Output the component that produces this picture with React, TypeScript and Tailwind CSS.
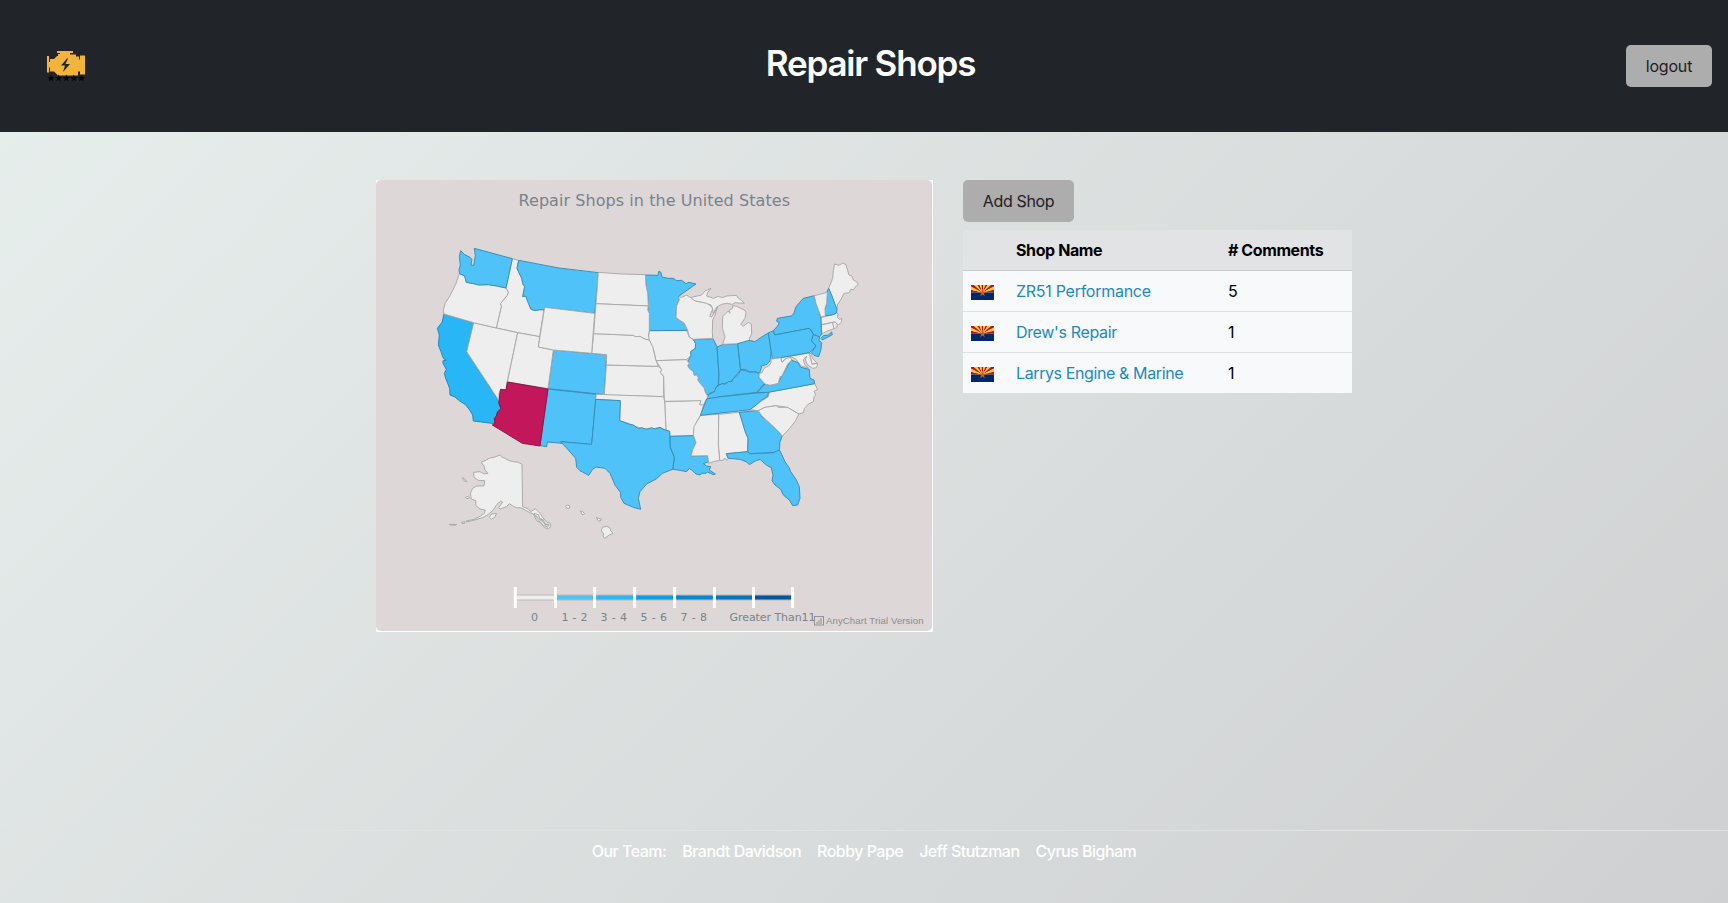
import React from "react";

type Origin = "west" | "central" | "east" | "south" | "pacific";
type Shape = { id: string; at: Origin; d: string };

const origins: Record<Origin, string> = {
  west: "translate(0 0)",
  central: "translate(480 0)",
  east: "translate(795 15)",
  south: "translate(225 405)",
  pacific: "translate(-165 585)",
};

const fills: Record<string, [string, string]> = {
  none: ["#eeeeee", "#a7a7a7"],
  low: ["#4fc3f9", "#378aaf"],
  mid: ["#29b6f7", "#1f82b0"],
  selected: ["#c2185b", "#8a1040"],
};

const low = new Set("CO FL GA IL IN KY LA MN MT NH NJ NM NY OH PA TN TX VA WA".split(" "));

const levelOf = (id: string) =>
  id === "AZ" ? "selected" : id === "CA" ? "mid" : low.has(id) ? "low" : "none";

const shapes: Shape[] = [
  { id: "AK", at: "pacific", d: "M390,75 L396,82 L405,85 L415,91 L430,95 L445,97 L456,103 L458,230 L475,237 L482,245 L496,236 L510,250 L518,262 L530,276 L541,280 L541,292 L532,297 L520,290 L512,278 L500,272 L490,252 L478,247 L455,234 L440,233 L430,229 L418,221 L410,230 L390,237 L386,233 L398,216 L392,213 L380,224 L370,240 L355,253 L340,262 L318,269 L290,276 L288,273 L312,268 L330,259 L343,250 L346,240 L330,237 L317,226 L318,212 L304,207 L301,190 L308,175 L320,168 L342,168 L344,152 L325,151 L312,142 L311,127 L330,125 L343,132 L354,130 L345,120 L342,108 L334,96 L345,92 L360,84 L375,81 Z M358,262 L365,252 L380,250 L374,262 L364,268 Z M278,143 L288,150 L289,156 L280,150 Z M287,202 L294,199 L298,204 L290,206 Z M275,277 L285,275 L284,280 L276,280 Z M238,283 L260,283 L256,286 L240,285 Z M492,250 L505,254 L511,270 L520,269 L526,283 L535,282 L533,292 L520,286 L498,262 Z M497,256 L518,276 M512,264 L530,290 M521,280 L538,286" },
  { id: "AL", at: "south", d: "M656,133 L718,127 L737,185 L744,205 L743,245 L679,251 L684,265 L680,271 L674,264 L670,271 L659,271 L655,225 Z" },
  { id: "AR", at: "south", d: "M494,95 L604,91 L600,103 L611,103 L604,132 L590,155 L582,175 L581,197 L510,199 L509,184 L498,180 Z" },
  { id: "CA", at: "west", d: "M57,237 L146,263 L125,350 L220,495 L222,506 L228,521 L218,530 L214,543 L208,551 L210,566 L145,558 L143,540 L132,522 L120,508 L104,498 L90,486 L75,480 L74,460 L62,430 L58,415 L64,403 L53,383 L55,376 L64,376 L55,370 L48,350 L40,330 L43,300 L37,280 L51,262 Z" },
  { id: "CO", at: "west", d: "M385,345 L545,359 L538,479 L369,461 Z" },
  { id: "CT", at: "east", d: "M394,255 L428,247 L432,266 L410,274 L396,282 Z" },
  { id: "DE", at: "east", d: "M358,341 L363,340 L368,356 L380,368 L366,373 Z" },
  { id: "FL", at: "south", d: "M679,251 L743,245 L750,251 L822,248 L830,240 L840,242 L855,275 L868,294 L872,305 L888,328 L898,350 L900,385 L893,405 L878,407 L868,390 L850,375 L842,358 L825,345 L816,332 L819,316 L814,293 L800,286 L780,268 L766,273 L748,284 L740,276 L720,268 L685,265 Z" },
  { id: "GA", at: "south", d: "M718,127 L778,121 L785,140 L800,150 L815,165 L832,181 L847,198 L840,215 L838,240 L822,247 L750,251 L743,245 L744,205 L737,190 Z" },
  { id: "HI", at: "pacific", d: "M587,229 L592,225 L600,228 L597,236 L590,234 Z M631,243 L638,245 L644,251 L638,255 Z M679,263 L694,267 L690,274 L684,271 Z M697,292 L710,289 L720,294 L722,302 L729,310 L718,315 L704,325 L699,318 L701,310 L694,304 Z" },
  { id: "IA", at: "central", d: "M193,287 L305,287 L313,306 L325,314 L332,325 L331,340 L317,350 L318,362 L304,374 L213,377 L206,345 L190,310 Z" },
  { id: "ID", at: "west", d: "M262,71 L281,76 L276,100 L290,130 L294,148 L299,155 L293,185 L302,183 L312,206 L316,222 L325,226 L357,223 L344,305 L278,293 L214,279 L229,214 L226,206 L246,182 L250,173 L243,159 Z" },
  { id: "IL", at: "central", d: "M325,314 L384,311 L396,335 L402,420 L400,448 L393,458 L390,470 L376,474 L371,481 L361,472 L357,458 L341,443 L338,435 L340,428 L335,420 L327,421 L325,410 L312,400 L307,382 L318,362 L317,350 L331,340 L332,325 Z" },
  { id: "IN", at: "central", d: "M396,336 L413,329 L458,326 L467,405 L450,425 L440,438 L420,445 L400,450 L402,420 Z" },
  { id: "KS", at: "central", d: "M64,390 L220,394 L230,404 L226,412 L236,424 L236,485 L58,480 Z" },
  { id: "KY", at: "central", d: "M467,404 L480,407 L495,411 L510,410 L524,417 L522,428 L538,446 L528,458 L515,472 L400,486 L395,490 L365,492 L371,478 L388,470 L393,458 L402,450 L412,446 L420,448 L430,440 L440,440 L446,430 L462,416 Z" },
  { id: "LA", at: "south", d: "M510,199 L581,197 L588,218 L578,240 L573,258 L623,257 L626,275 L610,281 L620,288 L632,290 L628,300 L646,312 L640,314 L622,306 L618,310 L606,310 L600,315 L588,312 L575,300 L568,295 L560,305 L540,301 L518,298 L523,262 L510,230 Z" },
  { id: "MA", at: "east", d: "M393,233 L425,225 L440,219 L445,222 L442,232 L448,238 L455,236 L455,246 L446,254 L440,252 L435,246 L427,247 L393,254 Z" },
  { id: "MD", at: "east", d: "M272,353 L358,339 L366,373 L383,370 L380,383 L368,385 L352,374 L346,360 L350,348 L340,360 L345,375 L355,383 L335,379 L325,368 L318,358 L303,350 L288,356 L276,367 Z" },
  { id: "ME", at: "east", d: "M416,145 L428,115 L430,92 L434,72 L447,76 L458,69 L468,74 L477,105 L485,108 L490,120 L500,125 L505,134 L495,142 L490,150 L482,148 L478,158 L462,160 L452,180 L443,192 L441,208 L425,170 Z" },
  { id: "MI", at: "central", d: "M315,188 L350,180 L360,168 L378,160 L368,172 L365,183 L385,190 L400,184 L412,188 L425,183 L455,181 L460,190 L468,194 L478,205 L450,203 L442,208 L425,205 L410,208 L395,216 L385,235 L383,222 L378,210 L350,202 L330,198 Z M413,328 L420,305 L412,280 L413,245 L423,235 L430,228 L435,235 L433,225 L443,220 L443,212 L455,214 L478,225 L483,232 L480,250 L467,268 L475,274 L490,262 L499,268 L500,297 L493,310 L493,320 L458,326 Z" },
  { id: "MN", at: "central", d: "M181,120 L219,121 L221,109 L228,112 L231,126 L250,130 L265,130 L275,137 L290,136 L303,146 L312,142 L333,147 L300,170 L281,184 L283,195 L275,212 L273,248 L298,265 L308,286 L193,287 L193,235 L188,225 L190,213 L188,175 L183,150 Z" },
  { id: "MO", at: "central", d: "M213,377 L304,374 L313,385 L308,390 L312,400 L325,410 L327,421 L335,420 L340,428 L338,435 L345,445 L357,458 L361,472 L368,484 L366,490 L355,510 L344,509 L348,497 L238,499 L236,424 L226,412 L230,404 Z" },
  { id: "MS", at: "south", d: "M602,136 L656,133 L655,225 L659,271 L640,275 L626,280 L623,257 L573,258 L578,240 L588,218 L580,195 L582,170 Z" },
  { id: "MT", at: "west", d: "M281,76 Q400,103 521,113 L509,235 L359,217 L357,225 L345,224 L330,227 L318,222 L310,205 L302,183 L293,185 L299,155 L294,148 L290,130 L276,100 Z" },
  { id: "NC", at: "south", d: "M749,119 L765,105 L785,93 L805,80 L808,66 L944,41 L953,58 L942,64 L947,75 L942,80 L940,95 L925,102 L913,116 L910,128 L897,132 L862,112 L828,107 L795,112 L775,122 Z" },
  { id: "ND", at: "central", d: "M40,112 L110,117 L181,119 L183,150 L188,175 L190,213 L33,206 Z" },
  { id: "NE", at: "central", d: "M26,296 L145,301 L152,305 L165,304 L180,312 L193,315 L203,335 L213,377 L220,394 L64,390 L65,359 L20,355 Z" },
  { id: "NH", at: "east", d: "M416,145 L425,165 L434,190 L441,208 L440,218 L430,224 L406,227 L404,210 L410,190 L411,155 Z" },
  { id: "NJ", at: "east", d: "M370,283 L389,289 L387,302 L395,308 L393,328 L386,350 L372,346 L364,338 L378,318 L364,302 Z" },
  { id: "NM", at: "west", d: "M369,462 L514,478 L500,629 L408,620 L411,625 L367,621 L365,635 L345,632 Z" },
  { id: "NV", at: "west", d: "M146,263 L214,279 L278,293 L247,440 L243,465 L227,463 L222,475 L222,497 L125,350 Z" },
  { id: "NY", at: "east", d: "M250,272 L263,258 L268,248 L260,244 L262,235 L303,228 L311,222 L318,200 L340,175 L373,167 L378,190 L386,212 L393,235 L394,285 L388,290 L370,283 L365,272 L358,265 L254,285 Z M393,295 L400,287 L415,285 L425,276 L427,284 L397,300 Z" },
  { id: "OH", at: "central", d: "M458,326 L493,316 L510,320 L530,306 L551,293 L559,350 L555,378 L546,388 L530,393 L524,415 L510,410 L495,411 L480,403 L467,404 Z" },
  { id: "OK", at: "south", d: "M289,73 L491,80 L494,96 L498,180 L478,172 L458,177 L430,176 L408,170 L385,160 L359,152 L361,92 L287,88 Z" },
  { id: "OR", at: "west", d: "M103,116 L119,123 L124,142 L146,146 L160,150 L190,149 L215,153 L243,159 L250,173 L246,182 L226,206 L229,214 L214,279 L146,263 L57,237 L55,226 L60,206 L76,180 L92,148 Z" },
  { id: "PA", at: "east", d: "M235,279 L250,272 L254,285 L358,265 L370,283 L364,302 L378,318 L365,332 L358,338 L247,357 Z" },
  { id: "RI", at: "east", d: "M428,247 L436,246 L442,254 L440,263 L432,266 Z" },
  { id: "SC", at: "south", d: "M775,122 L795,112 L828,107 L835,112 L862,112 L897,132 L885,155 L868,176 L847,198 L832,181 L815,165 L785,137 Z" },
  { id: "SD", at: "central", d: "M33,206 L190,213 L188,225 L193,235 L193,287 L190,300 L193,315 L180,312 L165,304 L152,305 L145,301 L26,296 Z" },
  { id: "TN", at: "central", d: "M365,492 L400,486 L515,474 L551,471 L547,485 L530,495 L515,509 L495,524 L346,541 L358,510 Z" },
  { id: "TX", at: "south", d: "M287,88 L361,92 L359,152 L370,156 L385,162 L400,165 L415,176 L425,173 L440,178 L455,173 L465,177 L480,172 L492,179 L509,184 L510,230 L523,262 L518,298 L487,310 L470,326 L440,342 L420,365 L415,385 L422,418 L400,412 L372,400 L362,382 L362,368 L345,345 L330,310 L315,295 L288,291 L278,298 L266,316 L240,302 L230,292 L227,265 L205,240 L182,215 L275,223 Z" },
  { id: "UT", at: "west", d: "M278,293 L344,305 L340,336 L385,345 L369,461 L247,441 Z" },
  { id: "VA", at: "east", d: "M201,458 L225,432 L240,436 L265,428 L276,408 L293,378 L303,360 L325,368 L332,382 L358,388 L360,415 L372,420 L374,431 L235,457 Z" },
  { id: "VT", at: "east", d: "M373,167 L412,157 L410,190 L405,205 L406,228 L393,231 L386,212 L378,190 Z" },
  { id: "WA", at: "west", d: "M107,47 L118,58 L135,67 L141,73 L138,90 L146,91 L151,62 L148,40 L262,71 L243,159 L215,153 L190,149 L160,150 L146,146 L124,142 L119,123 L104,116 L102,105 L106,90 L103,65 Z" },
  { id: "WI", at: "central", d: "M281,186 L290,187 L305,180 L320,190 L330,198 L365,205 L378,213 L383,222 L374,244 L380,246 L395,222 L397,216 L390,240 L383,255 L382,290 L383,310 L325,313 L313,306 L308,286 L298,265 L273,248 L275,212 L283,195 Z" },
  { id: "WV", at: "east", d: "M243,355 L247,357 L272,353 L276,367 L288,356 L301,351 L305,360 L293,372 L276,408 L270,410 L265,430 L240,436 L225,432 L207,412 L208,400 L216,398 L222,385 L238,376 L243,368 Z" },
  { id: "WY", at: "west", d: "M359,217 L509,235 L500,355 L385,345 L340,336 Z" },
  { id: "AZ", at: "west", d: "M247,441 L369,462 L345,633 L292,625 L202,570 L210,566 L208,551 L214,543 L218,530 L228,521 L222,506 L224,480 L227,463 L243,465 Z" },
];

const ticks = [515.3, 555.5, 594.6, 634.6, 674.6, 714.4, 753.5, 792.6];
const ramp = ["#eeeeee", "#4fc3f7", "#29b6f6", "#0b9de6", "#0288d1", "#0277bd", "#01579b"];

const labels: [string, number, number][] = [
  ["0", 531, 7],
  ["1 - 2", 561.5, 26],
  ["3 - 4", 600.5, 26.5],
  ["5 - 6", 640.5, 26.5],
  ["7 - 8", 680.5, 26.5],
  ["Greater Than11", 729.5, 86],
];

function ShopMap() {
  return (
    <div className="h-[452px] w-[557px] bg-white">
      <svg viewBox="376 180 556 451" className="block h-[451px] w-[556px]">
        <rect x="376" y="180" width="556" height="451" rx="5" fill="#ddd7d7" />
        <text x="518.5" y="206" textLength="271.5" fontSize="16" fill="#78838b" className="font-['DejaVu_Sans',sans-serif]">
          Repair Shops in the United States
        </text>
        <g transform="translate(425 235) scale(0.33333)" strokeWidth="2.8" strokeLinejoin="round">
          {shapes.map(({ id, at, d }) => {
            const [fill, stroke] = fills[levelOf(id)];
            return <path key={id} d={d} transform={origins[at]} fill={fill} stroke={stroke} />;
          })}
        </g>
        {ramp.map((color, i) => (
          <g key={color}>
            <rect x={ticks[i]} y="594.5" width={ticks[i + 1] - ticks[i]} height="6" fill="#000" opacity="0.14" />
            <rect x={ticks[i]} y="595.5" width={ticks[i + 1] - ticks[i]} height="4" fill={color} />
          </g>
        ))}
        {ticks.map((x) => (
          <rect key={x} x={x - 1.5} y="587" width="3" height="21" fill="#fff" />
        ))}
        <g fontSize="11" fill="#78838b" className="font-['DejaVu_Sans',sans-serif]">
          {labels.map(([text, x, w]) => (
            <text key={text} x={x} y="621" textLength={w}>{text}</text>
          ))}
        </g>
        <g fill="none" stroke="#929292">
          <rect x="814.5" y="616.5" width="9" height="8.5" />
          <path d="M817 624v-2M819 624v-4M821 624v-6" />
        </g>
        <text x="826" y="624" fontSize="9.6" textLength="97.5" fill="#8c8c8c" className="font-['Liberation_Sans',sans-serif]">
          AnyChart Trial Version
        </text>
      </svg>
    </div>
  );
}

function EngineLogo() {
  return (
    <svg viewBox="0 0 38 32" className="h-8 w-[38px]">
      <path fill="#f3b43c" d="M10 1h16v2h-3v1.500h6v2h3v3h1v-4h5v19h-5v-3h-2v4H11l-4-4H3v-4H2v5H0V6h2v6h1V9h4l3-3h1V4h2V3h-3z" />
      <path fill="#23272b" d="M20 8.500l-6 7h4l-2 6.500 7-8h-4.500l2.500-5.500z" />
      {[4, 11.600, 19.200, 26.800, 34.400].map((x) => (
        <path key={x} transform={`translate(${x} 28)`} fill="#050505" d="M0-3.400 1-1h2.600L1.500.7l.8 2.500L0 1.700-2.300 3.200l.8-2.500L-3.600-1H-1z" />
      ))}
    </svg>
  );
}

function ArizonaFlag() {
  const rays = Array.from({ length: 13 }, (_, i) => {
    const a = Math.PI + (i * Math.PI) / 13;
    const b = Math.PI + ((i + 1) * Math.PI) / 13;
    const p = (t: number) => `${11.5 + 30 * Math.cos(t)},${7.5 + 30 * Math.sin(t)}`;
    return <polygon key={i} points={`11.5,7.5 ${p(a)} ${p(b)}`} fill={i % 2 ? "#fed700" : "#bf0a30"} />;
  });
  return (
    <svg viewBox="0 0 23 15" className="block h-[15px] w-[23px]">
      {rays}
      <rect y="7.500" width="23" height="7.500" fill="#002868" />
      <path fill="#ce5c17" d="M11.500 4.200l.9 2.500h2.800l-2.300 1.700.9 2.800-2.300-1.700-2.300 1.700.9-2.800-2.300-1.700h2.800z" />
    </svg>
  );
}

const shops: [string, number, string][] = [
  ["ZR51 Performance", 5, "tracking-[-0.27px]"],
  ["Drew's Repair", 1, "tracking-[-0.35px]"],
  ["Larrys Engine & Marine", 1, "tracking-[-0.39px]"],
];

const team = ["Our Team:", "Brandt Davidson", "Robby Pape", "Jeff Stutzman", "Cyrus Bigham"];

export default function App() {
  return (
    <div className="flex h-[903px] w-full flex-col bg-[linear-gradient(135deg,#e7efed_0%,#cfd0d1_100%)] font-[Inter,sans-serif] text-base text-black">
      <header className="flex h-[132px] shrink-0 items-center justify-between bg-[#212529] pr-4 pl-[47px]">
        <div className="w-[99px]">
          <EngineLogo />
        </div>
        <h1 className="-mt-1.5 text-[35px] font-semibold tracking-[-1.2px] text-white">Repair Shops</h1>
        <div className="flex w-[117px] justify-end">
          <button className="h-[42px] w-[86px] rounded-[5px] bg-[#adadad] tracking-[-0.2px] text-[#1d2024]">logout</button>
        </div>
      </header>

      <main className="flex flex-1 gap-[30px] pt-12 pl-[376px]">
        <ShopMap />
        <section className="w-[389px]">
          <button className="h-[42px] w-[111px] rounded-[5px] bg-[#adadad] tracking-[-0.35px] text-[#1d2024]">Add Shop</button>
          <table className="mt-2 w-full table-fixed border-collapse text-left">
            <thead>
              <tr className="h-[40px] border-b border-[#c8cacc] bg-[#e1e3e5]">
                <th className="w-[53px]" />
                <th className="w-[212px] font-bold tracking-[-0.4px]">Shop Name</th>
                <th className="font-bold tracking-[-0.4px]"># Comments</th>
              </tr>
            </thead>
            <tbody>
              {shops.map(([name, count, tracking]) => (
                <tr key={name} className="h-[41px] border-b border-[#dee0e2] bg-[#f8f9fb] last:border-b-0">
                  <td className="pt-[3px] pl-2"><ArizonaFlag /></td>
                  <td className={`text-[#1c8abf] ${tracking}`}>{name}</td>
                  <td>{count}</td>
                </tr>
              ))}
            </tbody>
          </table>
        </section>
      </main>

      <footer className="flex h-[73px] shrink-0 justify-center gap-4 border-t border-[#dfe3e3] pt-2 font-medium text-white">
        {team.map((name) => (
          <span key={name} className="tracking-[-0.52px]">{name}</span>
        ))}
      </footer>
    </div>
  );
}
